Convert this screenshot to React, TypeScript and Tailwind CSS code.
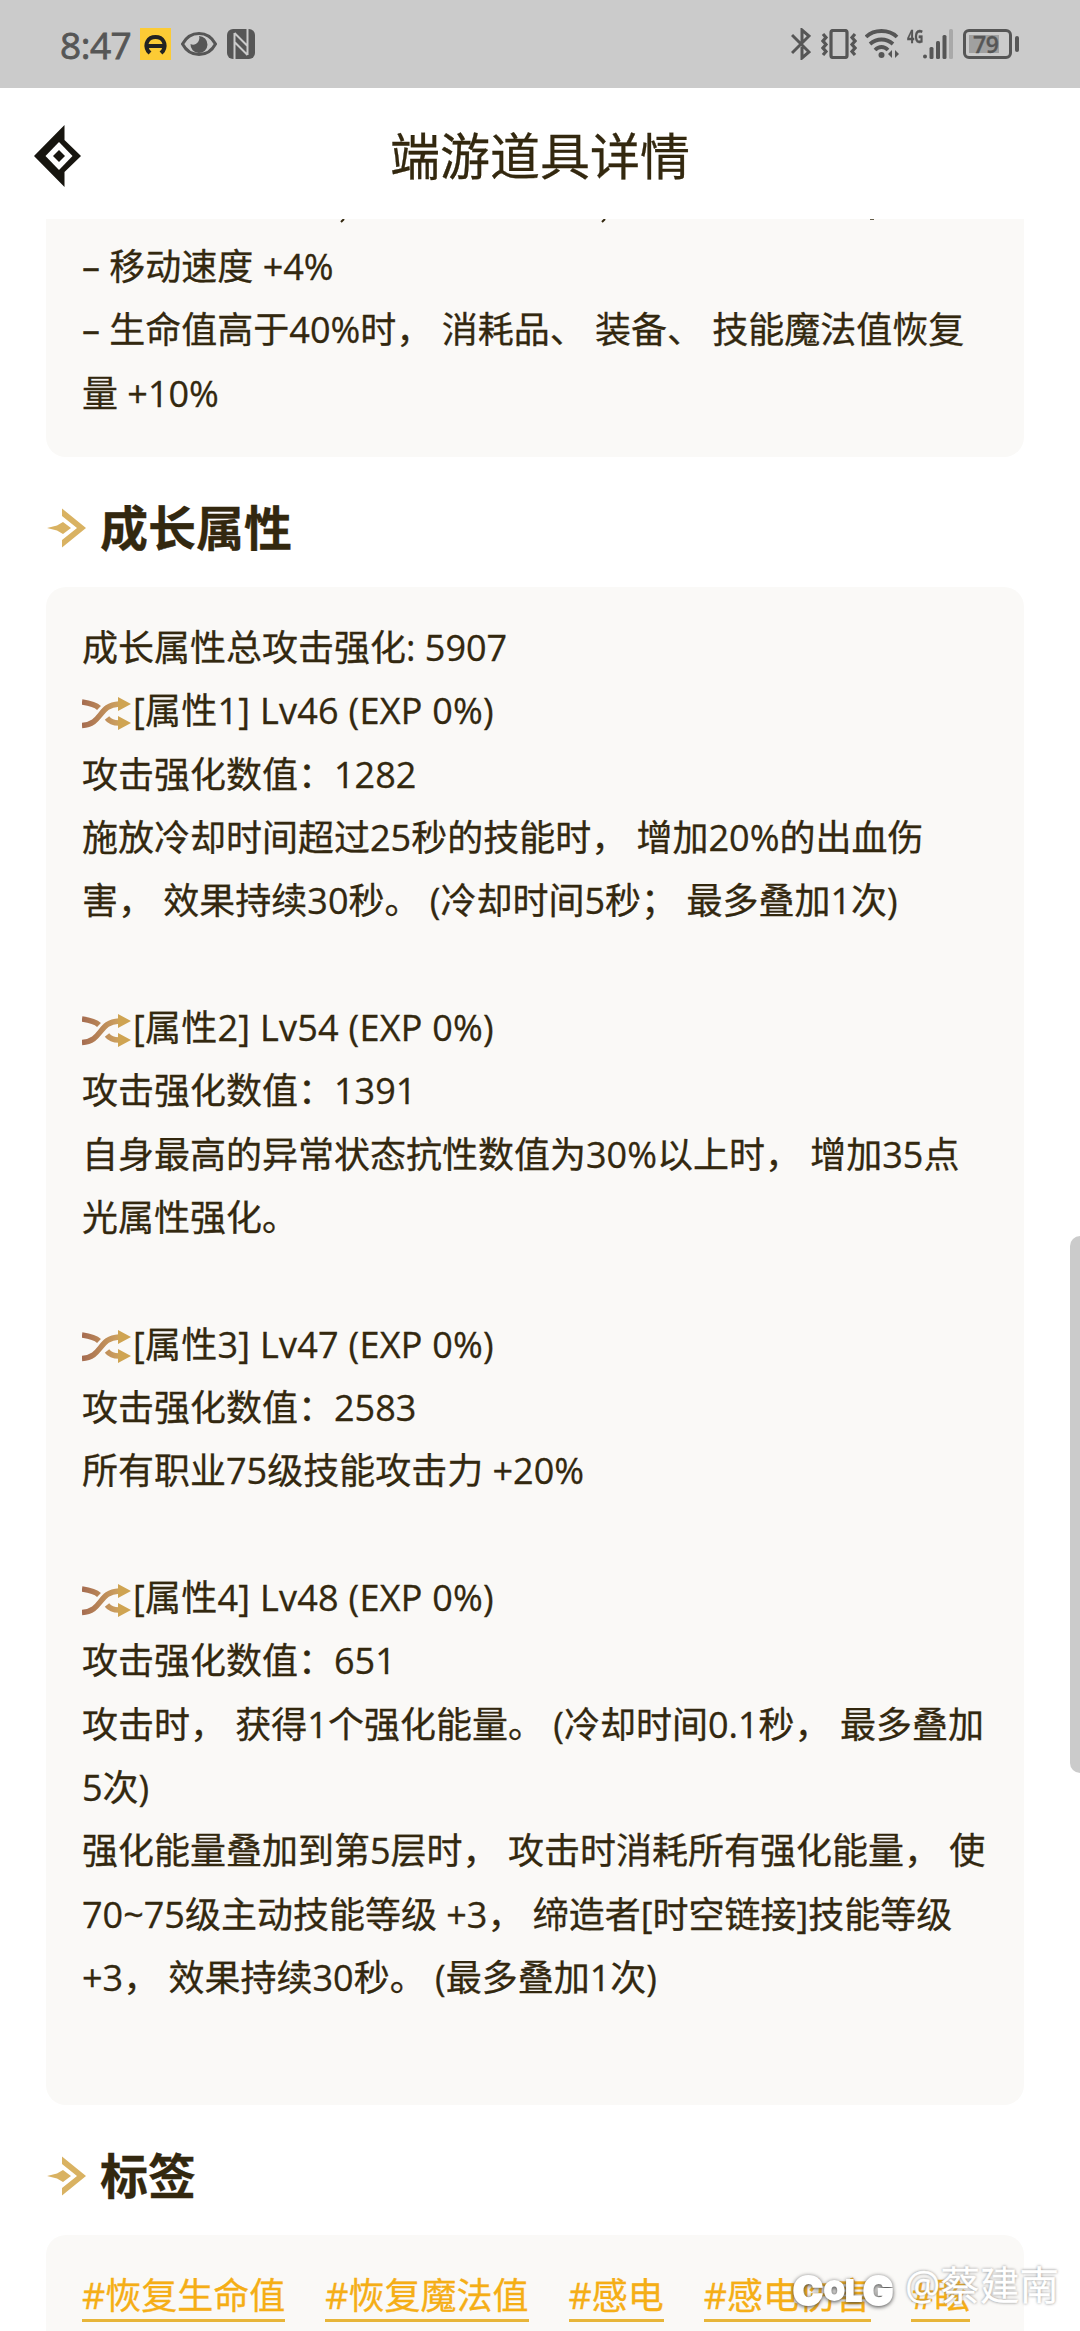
const topLines = ["– 移动速度 +4%", "– 生命值高于40%时， 消耗品、 装备、 技能魔法值恢复", "量 +10%"];

const growthLines = [
  "成长属性总攻击强化: 5907",
  "*[属性1] Lv46 (EXP 0%)",
  "攻击强化数值：1282",
  "施放冷却时间超过25秒的技能时， 增加20%的出血伤",
  "害， 效果持续30秒。 (冷却时间5秒； 最多叠加1次)",
  "",
  "*[属性2] Lv54 (EXP 0%)",
  "攻击强化数值：1391",
  "自身最高的异常状态抗性数值为30%以上时， 增加35点",
  "光属性强化。",
  "",
  "*[属性3] Lv47 (EXP 0%)",
  "攻击强化数值：2583",
  "所有职业75级技能攻击力 +20%",
  "",
  "*[属性4] Lv48 (EXP 0%)",
  "攻击强化数值：651",
  "攻击时， 获得1个强化能量。 (冷却时间0.1秒， 最多叠加",
  "5次)",
  "强化能量叠加到第5层时， 攻击时消耗所有强化能量， 使",
  "70~75级主动技能等级 +3， 缔造者[时空链接]技能等级",
  "+3， 效果持续30秒。 (最多叠加1次)",
  "",
];

const tags = ["#恢复生命值", "#恢复魔法值", "#感电", "#感电伤害", "#眩"];

function ShuffleIcon() {
  return (
    <svg className="mt-1.5 h-9 w-[51px] shrink-0" viewBox="0 0 51 36" fill="none">
      <defs>
        <linearGradient id="shuffle" x1="0" x2="50" y1="0" y2="0" gradientUnits="userSpaceOnUse">
          <stop offset="0" stopColor="#a56c50" />
          <stop offset="0.7" stopColor="#cc9f5e" />
          <stop offset="1" stopColor="#cfa452" />
        </linearGradient>
      </defs>
      <g stroke="url(#shuffle)" strokeWidth="5.500">
        <path d="M0 6 C7 7 13 8 17 12" />
        <path d="M0 29.500 C21 28 16 9 37 8" />
        <path d="M25 22 C28 26 31 27 37 27" />
      </g>
      <path d="M36 1 L49 8 L36 15 Z M36 20 L49 27 L36 34 Z" fill="#cfa452" />
    </svg>
  );
}

function Lines({ lines }: { lines: string[] }) {
  return (
    <>
      {lines.map((line, i) =>
        line.startsWith("*") ? (
          <p key={i} className="flex h-[63.33px] items-center whitespace-pre text-[36px] leading-[63.33px] tracking-[0.25px]">
            <ShuffleIcon />
            {line.slice(1)}
          </p>
        ) : (
          <p key={i} className="h-[63.33px] whitespace-pre text-[36px] leading-[63.33px]">
            {line}
          </p>
        )
      )}
    </>
  );
}

function SectionTitle({ title }: { title: string }) {
  return (
    <h2 className="flex h-[130px] items-center pt-3 text-[48px] font-bold">
      <svg className="mr-[14px] h-10 w-10" viewBox="0 0 40 40" fill="#d9b262">
        <path d="M1 20 L11 17.500 L17 14 L25 20 L17 26 L11 22.500 Z" />
        <path d="M16 0.500 L40 20 L16 39.500 L16 32 L31 20 L16 8 Z" />
      </svg>
      {title}
    </h2>
  );
}

function StatusBar() {
  return (
    <header className="flex h-[88px] items-center justify-between bg-[#cbcbcb] pr-[61px] pl-[60px] text-[#565656]">
      <div className="flex items-center">
        <span className="w-20 text-[37px] leading-none tracking-[-0.5px] [-webkit-text-stroke:0.8px_currentColor]">8:47</span>
        <svg className="h-8 w-[31px]" viewBox="0 0 31 32">
          <rect width="31" height="32" fill="#fccb35" />
          <path d="M10 25 L8 23 C4 16 8 9 15.500 9 C23 9 27 16 23 23 L21 25 M7 18 H24" fill="none" stroke="#222" strokeWidth="4" />
        </svg>
        <svg className="ml-2.5 h-6 w-9" viewBox="0 0 36 24" fill="none" stroke="currentColor" strokeWidth="3">
          <path d="M1.500 12 C9 -2 27 -2 34.500 12 C27 26 9 26 1.500 12 Z" />
          <path d="M18 4 A8.500 8.500 0 1 1 9.500 12 C14 15 20 9 18 4 Z" fill="currentColor" stroke="none" />
        </svg>
        <svg className="ml-2.5 h-[30px] w-7" viewBox="0 0 28 30">
          <rect width="28" height="30" rx="6" fill="currentColor" />
          <path d="M7.500 30 V4 M20.500 26 V0 M7.500 4 L20.500 17 M7.500 13 L20.500 26" fill="none" stroke="#cbcbcb" strokeWidth="2" />
        </svg>
      </div>
      <div className="flex items-center">
        <svg className="h-8 w-5" viewBox="0 0 20 32" fill="none" stroke="currentColor" strokeWidth="3">
          <path d="M1 7 L18 24 L11 30 V19 M1 25 L18 8 L11 2 V14" />
        </svg>
        <svg className="ml-2.5 h-[30px] w-9" viewBox="0 0 36 30" fill="none" stroke="currentColor" strokeWidth="3.200">
          <rect x="10" y="1.500" width="16" height="27" rx="2" />
          <path d="M2 5 L5 8.500 L2 12 L5 15.500 L2 19 L5 22.500 L2 26 M34 5 L31 8.500 L34 12 L31 15.500 L34 19 L31 22.500 L34 26" />
        </svg>
        <svg className="ml-2 h-[30px] w-[34px]" viewBox="0 0 34 30" fill="none" stroke="currentColor" strokeWidth="3.800">
          <path d="M1 8 C9 0 24 0 32 8 M5 15 C12 9 21 9 28 15 M10 21 C14 17 19 17 23 21" />
          <circle cx="16.500" cy="26" r="3" fill="currentColor" stroke="none" />
          <path d="M23 25 L27 21 V29 Z M30 21 L34 25 L30 29 Z" fill="currentColor" stroke="none" />
        </svg>
        <span className="-mt-4 ml-2 w-4 origin-left scale-x-75 text-[17px] font-bold leading-none">4G</span>
        <svg className="h-[30px] w-[30px]" viewBox="0 0 30 30" fill="currentColor">
          <circle cx="2" cy="27.500" r="2" />
          <rect x="6.500" y="18" width="4" height="12" rx="1.500" />
          <rect x="13" y="12" width="4" height="18" rx="1.500" />
          <rect x="19.500" y="6" width="4" height="24" rx="1.500" />
          <rect x="26" width="4" height="30" rx="1.500" fill="#a9a9a9" />
        </svg>
        <div className="ml-2.5 flex h-[30px] w-[49px] items-center rounded-[6px] border-[3px] border-current p-[3px]">
          <span className="h-full w-[30px] bg-[#a0a0a0] pl-1 text-[23px] font-semibold leading-[18px] tracking-[-0.5px]">79</span>
        </div>
        <span className="ml-[3px] h-4 w-1 rounded bg-current" />
      </div>
    </header>
  );
}

export default function App() {
  return (
    <div className="relative h-[2331px] w-[1080px] overflow-hidden bg-white font-['Open_Sans','Noto_Sans_CJK_SC',sans-serif] text-[#33280f] [-webkit-text-stroke:0.3px_currentColor]">
      <StatusBar />

      {/* Title bar */}
      <div className="flex h-[131px] items-center pt-1">
        <svg className="ml-[34px] h-[62px] w-[47px]" viewBox="0 0 47 62">
          <path d="M0 31 L30.500 0 V15 L47 31 L30.500 47 V62 Z" fill="#17150f" />
          <path d="M25 17 L38.500 31 L25 45 L11.500 31 Z" fill="#fff" />
          <path d="M25 25 L31 31 L25 37 L19 31 Z" fill="#17150f" />
        </svg>
        <h1 className="mr-[81px] flex-1 text-center text-[50px] leading-none">端游道具详情</h1>
      </div>

      <main className="pr-14 pl-[46px]">
        <section className="h-[238px] rounded-b-[20px] bg-[#faf9f7] px-9">
          {/* Tail of the line that is scrolled under the title bar */}
          <svg className="h-4 w-[906px]" viewBox="0 0 906 16" stroke="#33280f" strokeWidth="2" fill="none">
            <path d="M262 0 L259 3 M523 0 L520 3" />
            <path d="M788 0 H792" strokeWidth="1.500" />
          </svg>
          <Lines lines={topLines} />
        </section>

        <SectionTitle title="成长属性" />
        <section className="h-[1518px] rounded-[20px] bg-[#faf9f7] px-9 pt-[29px]">
          <Lines lines={growthLines} />
        </section>

        <SectionTitle title="标签" />
        <section className="flex h-[150px] gap-10 rounded-t-[20px] bg-[#faf9f7] px-9 pt-[38px] text-[36px] text-[#f5ae16]">
          {tags.map((tag) => (
            <span key={tag} className="h-[49px] shrink-0 border-b-[3px] border-[#e7b539] leading-[45px]">
              {tag}
            </span>
          ))}
        </section>
      </main>

      <div className="absolute top-[1236px] right-0 h-[537px] w-2.5 rounded-l-full bg-[#cbcbcb]" />

      {/* Watermark */}
      <div className="absolute right-[21px] bottom-[18px] flex items-center leading-none text-white">
        <span className="mr-2.5 flex w-[104px] items-center justify-between px-0.5 pt-1 font-['Inter','Open_Sans',sans-serif] font-black [-webkit-text-stroke:2px_white] [filter:drop-shadow(0_1px_2px_#444)]">
          <span className="text-[40px]">C</span>
          <span className="text-[26px]">O</span>
          <span className="text-[28px]">L</span>
          <span className="text-[40px]">G</span>
        </span>
        <span className="pb-2 text-[39.5px] [text-shadow:0_0_3px_#777]">@蔡建南</span>
      </div>
    </div>
  );
}
